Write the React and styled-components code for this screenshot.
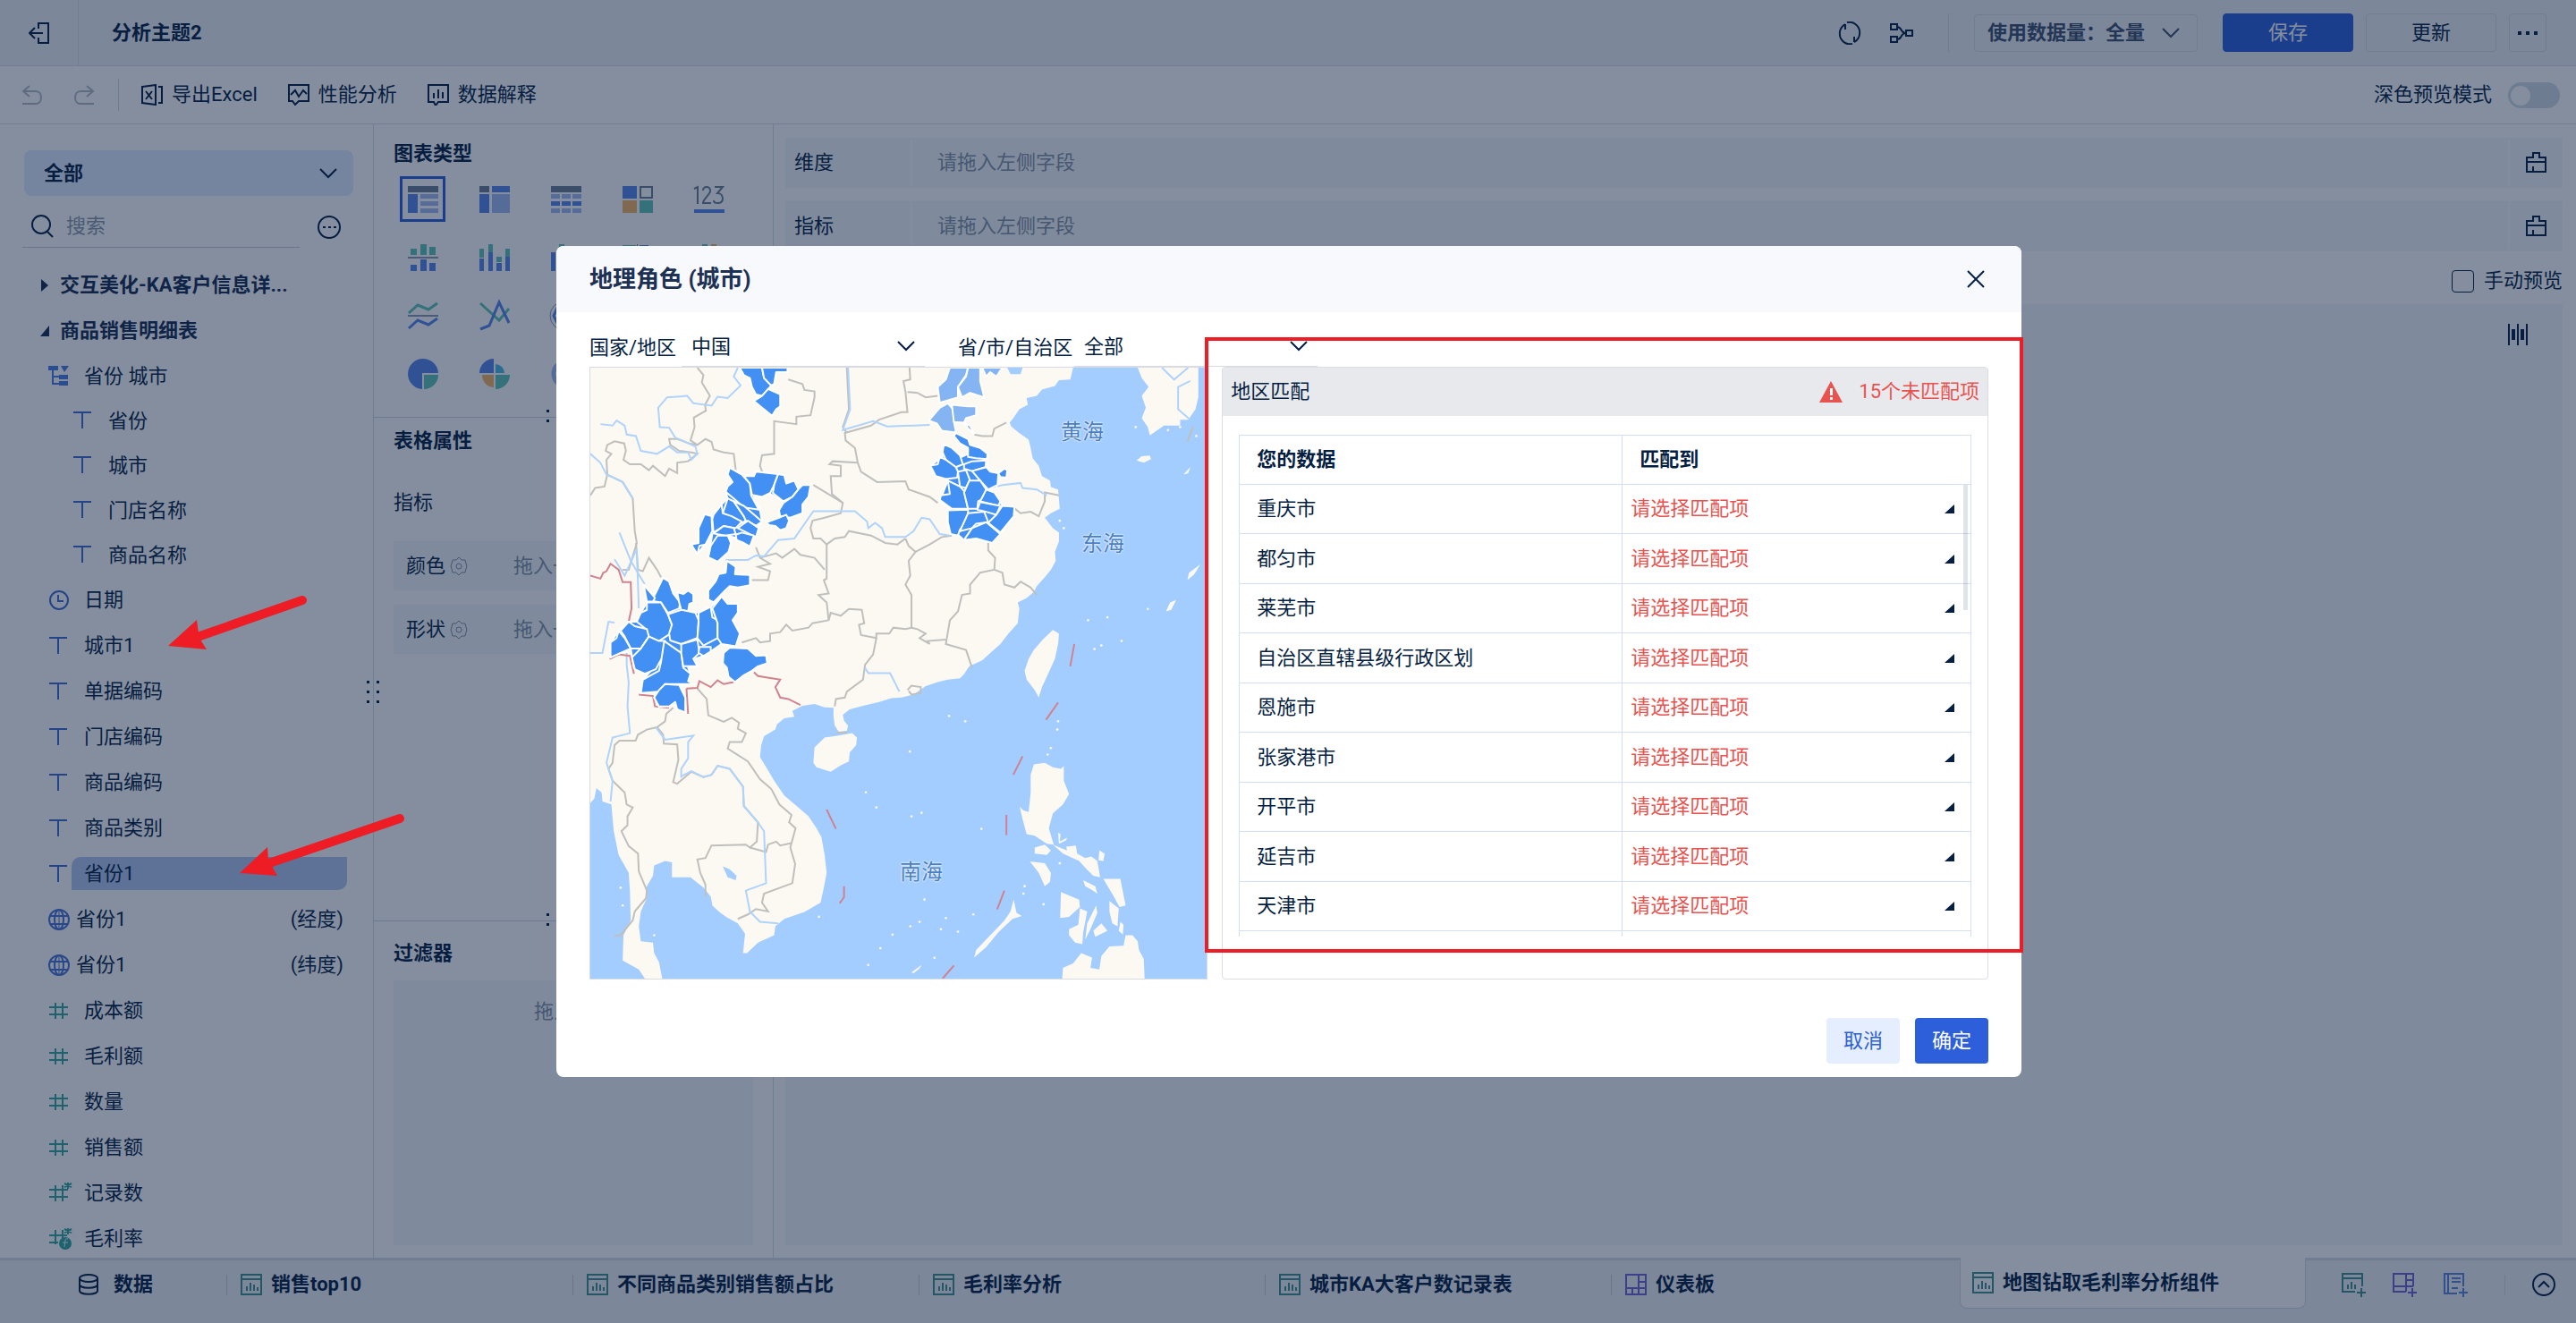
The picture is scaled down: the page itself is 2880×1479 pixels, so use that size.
import React from "react";
import styled, { createGlobalStyle } from "styled-components";

const GlobalStyle = createGlobalStyle`
  * {
    box-sizing: border-box;
  }
  body {
    margin: 0;
    color: #051e42;
    font-size: 22px;
    line-height: 30px;
    font-family: Roboto, "Noto Sans CJK SC", sans-serif;
  }
  button, input, select {
    font: inherit;
    color: inherit;
  }
  svg {
    display: block;
    flex: none;
  }
`;

const Page = styled.div`
  display: flex;
  flex-direction: column;
  height: 100vh;
  overflow: hidden;
  background: #fff;
`;
const Spacer = styled.div`
  flex: 1;
`;
const PlainButton = styled.button`
  display: flex;
  align-items: center;
  gap: ${(p) => p.$gap || 10}px;
  padding: 0;
  border: none;
  background: none;
  opacity: ${(p) => (p.$faded ? 0.3 : 1)};
`;
const Divider = styled.span`
  width: 1px;
  height: ${(p) => p.$height || 43}px;
  margin-left: ${(p) => (p.$push ? "auto" : 0)};
  background: #d5d9df;
`;

/* Header */
const Header = styled.header`
  display: flex;
  align-items: center;
  flex: none;
  height: 74px;
  padding-right: 33px;
  background: #eff0f4;
  border-bottom: 1px solid #dadde3;
`;
const BackCell = styled.div`
  display: flex;
  align-items: center;
  width: 88px;
  height: 73px;
  padding-left: 32px;
  border-right: 1px solid #dadde3;
`;
const PageTitle = styled.h1`
  margin: 0 0 0 37px;
  font-size: 22px;
  font-weight: 700;
`;
const HeaderIcons = styled.div`
  display: flex;
  align-items: center;
  gap: 32px;
  margin-right: 39px;
`;
const DataSelect = styled.div`
  position: relative;
  width: 250px;
  margin: 0 28px;
  color: #3c4e6b;
  svg {
    position: absolute;
    right: 20px;
    top: 15px;
    pointer-events: none;
  }
  select {
    width: 100%;
    height: 42px;
    padding: 0 0 0 14px;
    appearance: none;
    background: none;
    font-weight: 700;
    border: 1px solid #d8dce2;
    border-radius: 4px;
    opacity: 1;
  }
`;
const HeaderButton = styled.button`
  width: ${(p) => (p.$small ? 42 : 146)}px;
  height: 43px;
  margin-left: ${(p) => (p.$primary ? 0 : 14)}px;
  padding: 0;
  display: flex;
  align-items: center;
  justify-content: center;
  color: ${(p) => (p.$primary ? "#fff" : "#051e42")};
  background: ${(p) => (p.$primary ? "#2c5fd9" : "none")};
  border: 1px solid ${(p) => (p.$primary ? "#2c5fd9" : "#d8dce2")};
  border-radius: 4px;
`;

/* Toolbar */
const Toolbar = styled.div`
  display: flex;
  align-items: center;
  flex: none;
  height: 65px;
  padding: 0 18px 0 24px;
  border-bottom: 1px solid #dadde3;
`;
const ToolGroup = styled.div`
  display: flex;
  align-items: center;
  gap: ${(p) => p.$gap}px;
  margin-left: ${(p) => p.$left || 0}px;
`;
const SwitchLabel = styled.label`
  display: flex;
  align-items: center;
  gap: 18px;
  input {
    position: relative;
    appearance: none;
    width: 58px;
    height: 29px;
    margin: 0;
    border-radius: 15px;
    background: #d3dae2;
  }
  input::before {
    content: "";
    position: absolute;
    left: 3px;
    top: 4px;
    width: 22px;
    height: 22px;
    border-radius: 50%;
    background: #fff;
  }
`;

const Main = styled.main`
  display: flex;
  flex: 1;
  min-height: 0;
`;

/* Field list */
const Sidebar = styled.aside`
  position: relative;
  flex: none;
  width: 418px;
  padding-top: 29px;
  border-right: 1px solid #d5dce2;
`;
const TableSelect = styled.div`
  position: relative;
  margin: 0 22px 0 27px;
  svg {
    position: absolute;
    right: 18px;
    top: 20px;
    pointer-events: none;
  }
  select {
    width: 100%;
    height: 51px;
    padding: 0 0 0 22px;
    appearance: none;
    border: none;
    border-radius: 8px;
    background: #e0ecff;
    font-weight: 700;
  }
`;
const SearchRow = styled.div`
  display: flex;
  align-items: center;
  justify-content: space-between;
  margin: 11px 36px 0 25px;
`;
const SearchBox = styled.label`
  display: flex;
  align-items: center;
  gap: 14px;
  width: 310px;
  height: 47px;
  padding-left: 10px;
  border-bottom: 1px solid #c8d0da;
  input {
    width: 200px;
    padding: 0;
    border: none;
    outline: none;
    background: none;
  }
  input::placeholder {
    color: #8c97a8;
    opacity: 1;
  }
`;
const Tree = styled.ul`
  list-style: none;
  margin: 16px 0 0;
  padding: 0;
  max-height: calc(100vh - 366px);
  overflow: hidden;
`;
const TreeRow = styled.li`
  display: flex;
  align-items: center;
  height: ${(p) => (p.$tight ? 50 : 51)}px;
  padding: 0 29px 0 ${(p) => 54 + (p.$level || 0) * 27}px;
`;
const TreeGroup = styled(TreeRow)`
  gap: 12px;
  padding-left: 45px;
  font-weight: 700;
  color: #142b4f;
`;
const TreeIconBox = styled.div`
  width: 24px;
`;
const TreeLabel = styled.span`
  display: flex;
  justify-content: space-between;
  flex: 1;
  height: 37px;
  line-height: 37px;
  margin-left: 2px;
  padding: 0 4px 0 ${(p) => (p.$near ? 5 : 14)}px;
  border-radius: 10px 0;
  background: ${(p) => (p.$selected ? "#b1c6ec" : "none")};
`;
const Dots = styled.span`
  position: absolute;
  display: grid;
  grid-template-columns: repeat(${(p) => p.$cols}, 3px);
  gap: 8px;
  left: ${(p) => p.$left}px;
  ${(p) => (p.$top ? `top: ${p.$top}px;` : "bottom: -6px;")}
  i {
    height: 3px;
    background: #051e42;
  }
`;

/* Chart settings */
const Settings = styled.section`
  display: flex;
  flex-direction: column;
  flex: none;
  width: 447px;
  border-right: 1px solid #d5dce2;
`;
const Block = styled.div`
  position: relative;
  display: flex;
  flex-direction: column;
  flex: ${(p) => (p.$height ? "none" : 1)};
  height: ${(p) => (p.$height ? `${p.$height}px` : "auto")};
  padding: ${(p) => p.$top}px 22px 14px;
  border-bottom: ${(p) => (p.$height ? "1px solid #cfd6de" : "none")};
`;
const BlockTitle = styled.h2`
  margin: 0;
  font-size: 22px;
  font-weight: 700;
`;
const ChartGrid = styled.div`
  display: grid;
  grid-template-columns: repeat(5, 51px);
  grid-auto-rows: 51px;
  gap: 14px 29px;
  margin: 10px 0 0 7px;
`;
const ChartButton = styled.button`
  display: flex;
  align-items: center;
  justify-content: center;
  padding: 0;
  background: none;
  border: 3px solid ${(p) => (p.$active ? "#2c5fd9" : "transparent")};
`;
const AttrLabel = styled.div`
  margin: 39px 0 12px;
`;
const AttrRow = styled.div`
  display: flex;
  align-items: center;
  height: 55px;
  margin-top: 16px;
  padding-left: 14px;
  background: #f5f7f9;
  svg {
    margin: 0 51px 0 5px;
  }
`;
const Hint = styled.span`
  color: #8490a2;
`;
const FilterDrop = styled.div`
  flex: 1;
  margin-top: 15px;
  padding-top: 20px;
  text-align: center;
  background: #f5f7f9;
`;

/* Work area */
const Work = styled.section`
  display: flex;
  flex-direction: column;
  flex: 1;
  padding: 15px 15px 14px 13px;
`;
const Shelf = styled.div`
  display: flex;
  align-items: center;
  height: 56px;
  margin-bottom: 15px;
  background: #f5f7f9;
`;
const ShelfCell = styled.div`
  display: flex;
  align-items: center;
  height: 52px;
  flex: ${(p) => (p.$grow ? 1 : "none")};
  width: ${(p) => p.$width || 0}px;
  padding-left: ${(p) => p.$pad}px;
  border-right: ${(p) => (p.$last ? 0 : 2)}px solid #fbfcfd;
`;
const PreviewLabel = styled.label`
  display: flex;
  align-items: center;
  justify-content: flex-end;
  gap: 11px;
  height: 36px;
  margin-bottom: 8px;
  input {
    appearance: none;
    width: 25px;
    height: 25px;
    margin: 0;
    border: 1px solid #051e42;
    border-radius: 4px;
  }
`;
const Canvas = styled.div`
  display: flex;
  justify-content: flex-end;
  flex: 1;
  padding: 22px 38px;
  background: #f5f7f9;
`;

/* Bottom tabs */
const BottomBar = styled.nav`
  display: flex;
  flex: none;
  height: 73px;
  background: #eff0f4;
  border-top: 3px solid #d5dae2;
  font-weight: 700;
`;
const DataTab = styled.a`
  display: flex;
  align-items: center;
  gap: 15px;
  flex: none;
  width: 253px;
  height: 54px;
  padding-left: 87px;
  color: inherit;
  text-decoration: none;
`;
const Tab = styled.a`
  display: flex;
  align-items: center;
  gap: 10px;
  flex: 0 1 387px;
  height: 54px;
  color: inherit;
  text-decoration: none;
  white-space: nowrap;
  &::before {
    content: "";
    width: 1px;
    height: 23px;
    margin-right: 5px;
    background: #c6ccd6;
  }
`;
const ActiveTab = styled(Tab)`
  height: 57px;
  margin: -3px 0 0 3px;
  padding-left: 13px;
  background: #fff;
  border: 1px solid #d5dae2;
  border-top: none;
  border-radius: 0 0 8px 8px;
  &::before {
    display: none;
  }
`;
const TabActions = styled.div`
  display: flex;
  align-items: center;
  gap: 30px;
  flex: 1;
  height: 54px;
  padding: 0 23px 0 40px;
`;

/* Dialog */
const Overlay = styled.div`
  position: fixed;
  inset: 0;
  display: flex;
  align-items: center;
  justify-content: center;
  padding-left: 2px;
  background: rgba(9, 30, 64, 0.5);
`;
const Dialog = styled.div`
  position: relative;
  width: 1638px;
  max-width: 100%;
  background: #fff;
  border-radius: 8px;
`;
const DialogHeader = styled.div`
  display: flex;
  align-items: center;
  justify-content: space-between;
  height: 74px;
  padding: 0 41px 0 37px;
  border-radius: 8px 8px 0 0;
  background: #f8f9fd;
  h2 {
    margin: 0;
    font-size: 26px;
    font-weight: 700;
    color: #1c3154;
  }
`;
const RegionBar = styled.div`
  display: flex;
  align-items: flex-end;
  height: 61px;
  padding: 0 37px;
`;
const RegionLabel = styled.label`
  height: 42px;
  line-height: 42px;
  width: ${(p) => p.$width}px;
`;
const RegionSelect = styled.div`
  position: relative;
  width: 272px;
  margin-right: 37px;
  svg {
    position: absolute;
    right: 11px;
    top: 14px;
    pointer-events: none;
  }
  select {
    width: 100%;
    height: 43px;
    padding: 0 0 0 11px;
    appearance: none;
    background: none;
    border: none;
    border-bottom: 1px solid #d8dbe3;
  }
`;
const DialogBody = styled.div`
  display: flex;
  gap: 16px;
  height: 685px;
  padding: 0 37px;
`;
const MapBox = styled.div`
  position: relative;
  flex: 691;
  border: 1px solid #d8dbe3;
  background: #a3cdff;
  overflow: hidden;
  svg {
    width: 100%;
    height: 100%;
  }
`;
const SeaName = styled.span`
  position: absolute;
  left: ${(p) => p.$x}px;
  top: ${(p) => p.$y}px;
  font-size: 24px;
  color: #4a7fc4;
  text-shadow: 0 0 2px #fff, 0 0 2px #fff;
`;
const MatchPanel = styled.div`
  flex: 857;
  border: 1px solid #dcdee4;
  border-radius: 4px;
`;
const MatchHeader = styled.div`
  display: flex;
  align-items: center;
  justify-content: space-between;
  height: 54px;
  padding: 0 9px;
  background: #e8e9ed;
`;
const Unmatched = styled.span`
  display: flex;
  align-items: center;
  gap: 17px;
  color: #e85350;
`;
const MatchScroll = styled.div`
  position: relative;
  height: 561px;
  margin: 21px 18px 0;
  overflow: hidden;
  &::after {
    content: "";
    position: absolute;
    right: 4px;
    top: 56px;
    width: 5px;
    height: 140px;
    background: rgba(9, 30, 64, 0.12);
  }
`;
const MatchTable = styled.table`
  width: 100%;
  table-layout: fixed;
  border-collapse: collapse;
  th, td {
    height: 55px;
    padding: 0 0 0 19px;
    text-align: left;
    border: 1px solid #d3dff7;
  }
  tr:nth-child(even) td {
    height: 56px;
  }
  th:first-child {
    width: 428px;
  }
  td + td {
    padding: 0 18px 0 9px;
  }
`;
const MatchCell = styled.div`
  display: flex;
  align-items: center;
  select {
    flex: 1;
    padding: 0;
    appearance: none;
    border: none;
    background: none;
    color: #e85350;
  }
`;
const DialogFooter = styled.div`
  display: flex;
  justify-content: flex-end;
  gap: 17px;
  padding: 43px 37px 15px;
`;
const FooterButton = styled.button`
  width: 82px;
  height: 51px;
  padding: 0;
  border: none;
  border-radius: 4px;
  color: ${(p) => (p.$primary ? "#fff" : "#2c5fd9")};
  background: ${(p) => (p.$primary ? "#2c5fd9" : "#e5eeff")};
`;
const RedFrame = styled.div`
  position: absolute;
  left: 725px;
  top: 102px;
  width: 915px;
  height: 688px;
  border: 4px solid #ee1c25;
  pointer-events: none;
`;
const Arrows = styled.svg`
  position: fixed;
  left: 180px;
  top: 660px;
  fill: #ee1c25;
  stroke: #ee1c25;
  pointer-events: none;
`;

const BLUE = "#5787ea";
const PALE = "#a3baf0";
const SLATE = "#6b7e93";
const TEAL = "#5fc4b4";
const GOLD = "#f5b560";

const Chevron = () => (
  <svg width="20" height="12" fill="none" stroke="currentColor" strokeWidth="2">
    <path d="M1 1l9 9 9-9" />
  </svg>
);

const Line = ({ w = 24, h = 24, color = "#051e42", width = 2, children }) => (
  <svg width={w} height={h} fill="none" stroke={color} strokeWidth={width}>
    {children}
  </svg>
);

const TextIcon = () => (
  <Line color="#3f6bd0">
    <path d="M1 3h20M11 3v18" />
  </Line>
);
const HashIcon = ({ star, fx }) => (
  <Line w={28} color="#33a79b">
    <path d={fx ? "M8 2v16M16 2v9M1 8h20M1 16h10" : "M8 3v18M16 3v18M1 8h21M1 16h21"} />
    {star && <path d="M22-1v8M18 1l8 4M26 1l-8 4" strokeWidth="2" />}
    {fx && <circle cx="19" cy="17" r="7" fill="#33a79b" stroke="none" />}
    {fx && <path d="M22 12c-2-1-3 0-3 2l-1 7M16 16h6" stroke="#dff" strokeWidth="1" />}
  </Line>
);
const GlobeIcon = () => (
  <Line w={24} h={26} color="#4a73d2" width={1}>
    <circle cx="12" cy="13" r="11" strokeWidth="2" />
    <ellipse cx="12" cy="13" rx="5" ry="11" strokeWidth="2" />
    <path d="M12 2v22" />
    <path d="M2 9h20M2 18h20" strokeWidth="2" />
  </Line>
);
const ClockIcon = () => (
  <Line color="#3f6bd0">
    <circle cx="12" cy="12" r="10" />
    <path d="M11 6v7h6" />
  </Line>
);
const TreeIcon = () => (
  <svg width="24" height="24" fill="#4a7be0">
    <path d="M0 1h11v5H0zM14 1h9l-5 7zM12 11h10v5H12zM12 18h10v5H12zM4 6h2v14h6v2H4zM5 12h7v2H5z" />
  </svg>
);

const icons = {
  tree: <TreeIcon />,
  text: <TextIcon />,
  clock: <ClockIcon />,
  globe: <GlobeIcon />,
  hash: <HashIcon />,
  hashStar: <HashIcon star />,
  hashFx: <HashIcon star fx />,
};

const fields = [
  { icon: "tree", name: "省份 城市", tight: true },
  { icon: "text", name: "省份", level: 1, tight: true },
  { icon: "text", name: "城市", level: 1, tight: true },
  { icon: "text", name: "门店名称", level: 1, tight: true },
  { icon: "text", name: "商品名称", level: 1, tight: true },
  { icon: "clock", name: "日期" },
  { icon: "text", name: "城市1" },
  { icon: "text", name: "单据编码" },
  { icon: "text", name: "门店编码" },
  { icon: "text", name: "商品编码" },
  { icon: "text", name: "商品类别" },
  { icon: "text", name: "省份1", selected: true },
  { icon: "globe", name: "省份1", note: "(经度)" },
  { icon: "globe", name: "省份1", note: "(纬度)" },
  { icon: "hash", name: "成本额" },
  { icon: "hash", name: "毛利额" },
  { icon: "hash", name: "数量" },
  { icon: "hash", name: "销售额" },
  { icon: "hashStar", name: "记录数" },
  { icon: "hashFx", name: "毛利率" },
];

const chartIcons = [
  ["分组表", <><path fill={SLATE} d="M0 0h34v7H0z" /><path fill={BLUE} d="M0 9h11v21H0z" /><path fill={PALE} d="M14 9h20v5H14zM14 17h20v5H14zM14 25h20v5H14z" /></>],
  ["交叉表", <><path fill={SLATE} d="M0 0h11v7H0z" /><path fill={BLUE} d="M14 0h20v7H14zM0 9h11v21H0z" /><path fill={PALE} d="M14 9h20v21H14z" /></>],
  ["明细表", <><path fill={SLATE} d="M0 0h34v7H0z" /><path fill={PALE} d="M0 9h10v5H0zM12 9h10v5H12zM24 9h10v5H24zM0 25h10v5H0zM12 25h10v5H12zM24 25h10v5H24z" /><path fill={BLUE} d="M0 17h10v5H0zM12 17h10v5H12zM24 17h10v5H24z" /></>],
  ["颜色表格", <><path fill={BLUE} d="M0 0h16v14H0z" /><path fill="none" stroke={SLATE} strokeWidth="2" d="M20 1h13v12H20z" /><path fill={GOLD} d="M0 16h16v14H0z" /><path fill={TEAL} d="M19 16h15v14H19z" /></>],
  ["指标卡", <><path fill="none" stroke={SLATE} strokeWidth="2" d="M0 3l4-2v19M10 5c0-6 9-5 8 1-1 4-8 9-8 13h9M23 1h9l-6 7c8 0 8 12 0 11-2 0-4-1-4-3" /><path fill={BLUE} d="M0 26h34v4H0z" /></>],
  ["对比柱形图", <><path fill={TEAL} d="M3 5h7v7H3zM14 0h7v12h-7zM24 3h7v9h-7z" /><path fill="#8c98ab" d="M0 14h34v2H0z" /><path fill={BLUE} d="M3 23h7v7H3zM14 17h7v13h-7zM24 21h7v9h-7z" /></>],
  ["堆积柱形图", <><path fill={TEAL} d="M0 5h5v10H0zM10 0h5v9h-5zM19 14h6v6h-6zM29 5h5v9h-5z" /><path fill={BLUE} d="M0 16h5v14H0zM10 9h5v21h-5zM19 21h6v9h-6zM29 14h5v16h-5z" /></>],
  ["分组柱形图", <><path fill={BLUE} d="M0 9h5v21H0z" /><path fill={TEAL} d="M9 0h6v30H9z" /></>],
  ["对比条形图", <><path fill={TEAL} d="M0 1h15v6H0z" /><path fill={SLATE} d="M16 0h1v30h-1z" /><path fill={BLUE} d="M19 1h10v6H19z" /></>],
  ["瀑布图", <><path fill={TEAL} d="M9 0h6v9H9z" /><path fill={GOLD} d="M19 0h6v14h-6z" /></>],
  ["范围面积图", <><path fill="none" stroke={TEAL} strokeWidth="3" d="M1 12l10-9 12 5L33 1" /><path fill="#8c98ab" d="M0 14h34v2H0z" /><path fill="none" stroke={BLUE} strokeWidth="3" d="M1 29l10-9 12 5 10-7" /></>],
  ["折线图", <><path fill="none" stroke={TEAL} strokeWidth="3" d="M1 1l21 19L33 7" /><path fill="none" stroke={BLUE} strokeWidth="3" d="M1 30l10-4L22 0l11 23" /></>],
  ["雷达图", <><circle cx="15" cy="15" r="16" fill="none" stroke="#8c98ab" /><path fill="none" stroke={BLUE} strokeWidth="3" d="M9 2L3 15l6 12" /></>],
  ["散点图", <circle cx="17" cy="15" r="5" fill={TEAL} />],
  ["气泡图", <circle cx="17" cy="15" r="7" fill={BLUE} />],
  ["饼图", <><path fill={BLUE} d="M16 32A17 17 0 1 1 34 14H16z" /><path fill={TEAL} d="M18 16h16a16 16 0 0 1-16 16z" /></>],
  ["玫瑰图", <><path fill={BLUE} d="M16-2v16H0A16 16 0 0 1 16-2z" /><path fill="#4bb8e0" d="M18 4a11 10 0 0 1 10 10H18z" /><path fill={GOLD} d="M16 16v14A13 14 0 0 1 3 16z" /><path fill={TEAL} d="M18 16h16a16 16 0 0 1-16 16z" /></>],
  ["环形图", <circle cx="17" cy="15" r="14" fill="none" stroke={PALE} strokeWidth="5" />],
];

const cities = ["重庆市", "都匀市", "莱芜市", "自治区直辖县级行政区划", "恩施市", "张家港市", "开平市", "延吉市", "天津市"];

const land = [
  "20,150 1052,150 1060,172 1085,172 1090,150 1215,150 1208,190 1180,192 1170,212 1138,224 1125,245 1100,252 1103,275 1082,290 1068,318 1058,335 1062,348 1080,368 1105,392 1110,420 1115,455 1130,480 1138,515 1158,530 1160,552 1178,560 1182,625 1160,640 1145,655 1165,690 1180,705 1180,735 1170,770 1172,800 1160,830 1145,855 1125,885 1118,905 1100,925 1078,940 1082,960 1078,1010 1055,1045 1035,1080 1010,1110 990,1135 958,1155 945,1182 935,1195 905,1200 880,1208 850,1222 820,1250 790,1260 765,1262 735,1275 695,1288 662,1300 645,1318 648,1338 658,1355 655,1372 635,1375 625,1355 622,1325 622,1295 600,1293 575,1282 545,1288 520,1305 525,1325 500,1330 482,1350 478,1368 450,1390 443,1420 440,1460 460,1505 475,1540 500,1590 535,1630 560,1660 580,1700 592,1730 600,1790 605,1850 598,1900 590,1950 550,1982 500,2005 478,2030 475,2060 435,2085 408,2120 398,2120 403,2055 385,2020 358,2000 342,1985 322,1960 318,1930 300,1900 268,1865 222,1865 222,1815 205,1810 178,1825 175,1860 158,1900 160,1935 145,1980 140,2030 145,2080 175,2085 178,2120 190,2150 198,2206 155,2206 140,2175 100,2145 102,2060 120,2010 118,1910 115,1850 90,1790 78,1710 72,1620 50,1610 48,1580 35,1565 30,1600 20,1615",
  "575,1428 600,1395 635,1388 668,1380 680,1395 678,1420 662,1445 660,1475 640,1488 615,1510 580,1495 572,1480",
  "1165,1033 1180,1045 1178,1080 1170,1130 1160,1160 1150,1190 1138,1225 1130,1260 1120,1235 1100,1200 1095,1170 1105,1130 1118,1100 1140,1065",
  "1375,150 1525,150 1525,250 1518,290 1500,325 1480,325 1480,345 1440,345 1405,378 1400,350 1385,320 1395,285 1385,245 1402,215 1385,185",
  "1372,462 1385,448 1405,446 1408,458 1390,470",
  "1118,1485 1145,1480 1165,1495 1185,1500 1192,1490 1192,1540 1205,1585 1190,1620 1165,1650 1155,1700 1167,1755 1150,1752 1120,1725 1100,1720 1090,1670 1083,1628 1092,1640 1105,1645 1110,1580 1110,1520",
  "1120,1765 1145,1755 1160,1775 1150,1790 1120,1785",
  "1108,1812 1145,1818 1160,1850 1158,1880 1145,1895 1130,1850",
  "1165,1755 1200,1775 1198,1762 1222,1758 1225,1785 1245,1800 1260,1795 1275,1810 1282,1865 1265,1860 1250,1840 1230,1810 1190,1785",
  "1280,1775 1293,1785 1290,1810 1278,1808",
  "1178,1715 1184,1720 1182,1745 1200,1732 1198,1740 1180,1752",
  "1290,1870 1332,1870 1345,1960 1330,1965 1318,1935 1305,1905",
  "1185,1915 1230,1940 1232,1965 1205,1998 1183,2002",
  "1232,1970 1250,1980 1240,2050 1238,2090 1220,2085 1205,2060 1205,2040 1228,2025",
  "1272,1960 1275,1985 1258,2040 1245,2075 1250,2020",
  "1265,2045 1285,2020 1300,2045 1270,2065",
  "1305,1945 1328,1970 1325,2030 1312,2020 1305,1980",
  "1240,1875 1270,1895 1275,1920 1262,1908 1245,1895",
  "1332,2015 1340,2025 1338,2058 1328,2045",
  "1188,2206 1190,2170 1215,2155 1235,2120 1262,2135 1258,2170 1280,2175 1285,2130 1305,2098 1340,2095 1345,2060 1362,2060 1375,2080 1378,2110 1390,2140 1392,2206",
  "1068,1940 1075,1985 1088,1995 1065,2005 1030,2050 1000,2100 970,2135 975,2110 1010,2060 1045,2010 1060,1980",
  "815,2185 840,2160 835,2172 820,2188",
  "1488,510 1505,485 1500,505",
  "1498,865 1502,840 1530,812 1515,845",
  "1445,970 1455,940 1470,932 1458,965",
];
const specks = [
  [908, 1322], [948, 1340], [1178, 1340], [1176, 1368], [1160, 1430], [1152, 1452], [811, 1442], [728, 1630], [702, 1579],
  [815, 1660], [840, 1648], [988, 1702], [1252, 1000], [1300, 990], [1285, 1085], [1335, 1070], [1268, 1097], [847, 1940],
  [968, 1990], [900, 2002], [888, 2040], [812, 2030], [768, 2058], [835, 2015], [930, 2048], [872, 2136], [1095, 1895],
  [1092, 1920], [1182, 1818], [1142, 1956], [708, 2160], [738, 2104], [586, 1998], [1400, 962], [1182, 665], [1192, 690],
  [1420, 340], [1370, 350], [1450, 360], [1480, 350], [1520, 380], [95, 1900], [100, 1960], [178, 2060],
];
const borders = [
  "285,150 300,175 296,200 316,245 304,275 306,295 276,318 278,350 268,395 285,410",
  "20,580 32,555 55,550 62,510 60,460 72,440 58,430 62,410 80,398 104,405 108,430 102,460 118,475 145,475 165,495 175,480 205,515 215,490 235,505 235,470 262,465 285,440 270,435 240,430 218,410 215,390 235,390 265,405 285,410 305,390 320,400 325,425 350,435 375,440 380,495",
  "510,190 545,205 550,225 575,230 575,250 565,310 530,315 530,340 475,330 475,440 445,445 440,480 445,500",
  "655,150 660,290 645,350 655,370",
  "810,150 812,190 795,195 800,230 805,300 790,300 735,325 715,345 650,370 652,395 675,420 682,470 690,500 730,535 800,532 808,560 860,585 880,605",
  "805,232 830,235 850,250 880,245",
  "682,470 620,465 612,475 640,480 640,515 615,515 618,575 645,605 640,640 600,655 570,665 565,690 572,725 590,725 605,745 625,725 650,720 660,700 715,715 750,740 780,745 800,725",
  "572,545 645,605",
  "605,745 605,860 598,865 610,910 585,915 605,940 610,1000",
  "800,725 808,750 825,770 808,800 812,850 800,880 815,915 815,1025",
  "825,770 860,745 890,720 915,715",
  "1005,740 1005,765 1022,790 1020,830 1040,840 1045,880 1070,890 1085,870 1110,890 1125,915",
  "1020,830 985,840 960,880 960,910 940,915 930,970 910,1000 900,1080 950,1100 960,1140 965,1160",
  "610,1000 570,1010 560,1025 520,1035 505,1015 490,1040 465,1045 465,1070 440,1075 430,1060 395,1075",
  "610,1000 615,975 640,985 660,962 692,965 698,1010 685,1015 690,1050 728,1060 728,1045 760,1045 770,1025 800,1030 815,1025 830,1030 850,1045 835,1060 860,1080 855,1070 900,1065",
  "728,1060 720,1115 700,1150 695,1200 655,1240 650,1260 628,1265 625,1290",
  "430,755 440,790 465,810 435,820 465,835 460,865 420,865",
  "440,790 480,775 495,790 525,760 540,780 575,790 600,830",
  "62,510 100,535 125,590 130,700 135,740 115,830 100,830",
  "133,740 138,830 150,835 165,790 185,830 195,855",
  "1065,618 1085,640 1110,635 1130,650 1145,600 1145,570 1180,580",
  "970,375 990,380 1015,380 1020,355 1050,335",
  "285,1230 308,1265 312,1320 350,1342 370,1328 388,1345 385,1365 405,1380 395,1410 365,1410 360,1432 410,1475 440,1535 468,1568 488,1620 518,1655 512,1680 528,1700 515,1765 527,1820 520,1885 450,1920 445,1950 460,1980 430,1972 410,1990 385,2005",
  "225,1295 208,1315 205,1340 185,1360 160,1368 138,1385 132,1405 92,1405 80,1420 75,1480 65,1500 75,1540 105,1580 110,1620 125,1630 112,1660 112,1690 97,1710 115,1760 138,1785 140,1845 160,1910 158,1935 130,1980 125,2010 95,2060 80,2062",
  "185,1360 200,1385 202,1415 235,1418 238,1470 225,1545 235,1550 270,1510 300,1528 320,1520 335,1490 365,1500 398,1560 400,1625 435,1680 432,1745 415,1765 405,1755 320,1758 305,1800 285,1805 292,1850 305,1890 305,1930",
  "415,1765 455,1780 460,1755 480,1745 490,1758 518,1750",
  "630,1378 655,1378",
  "805,1235 815,1220 838,1225 838,1245 815,1250 808,1238",
  "1498,400 1512,348",
];
const rivers = [
  "45,340 75,345 85,328 105,345 110,375 133,380 145,430 185,440 215,415 235,435 262,435 270,460 285,440 280,415 230,385 215,352 192,350 188,285 210,250 260,245 275,270 320,278 335,248 360,252 392,210 375,180 385,150",
  "355,797 410,797 430,782 450,785 485,730 525,725 572,633 675,633 705,668 708,690 725,672 742,690 750,720 800,720 820,700 840,655 860,660 885,710 910,715",
  "658,150 663,290 645,360 720,330 755,348 860,343",
  "1025,550 1040,545 1085,538 1090,555 1125,560 1150,580",
  "20,440 45,470 60,510 100,535 125,590",
  "92,705 120,800 155,880",
  "80,795 105,850 135,760 140,960",
  "20,1110 50,1110 65,1005 80,1008",
  "110,1110 110,1150 115,1210 112,1290 118,1380 75,1395 60,1480 75,1540 70,1610",
  "182,1360 205,1402 275,1388 262,1410 262,1465 245,1500 245,1530",
  "245,1525 270,1508 300,1528 320,1520 335,1490 365,1500 398,1560 400,1625 435,1680 450,1710 455,1885 405,1910 415,1980 440,2015 485,2020",
  "700,1160 708,1178 762,1178 785,1240",
  "1435,150 1465,190 1500,150",
  "1505,195 1475,215 1475,290 1505,325",
];
const redLines = [
  "20,850 45,860 52,840 60,835 70,810 90,830 100,872 120,872 122,960 115,1005",
  "425,1175 435,1188 490,1200 478,1225 490,1260 510,1265 540,1285",
  "258,1230 285,1228 290,1205 318,1225 335,1202 350,1215 375,1208",
  "68,1130 90,1115 118,1120 128,1180",
  "140,1250 175,1255 180,1290 215,1295",
  "258,1230 262,1315",
  "1218,1080 1208,1155",
  "1178,1277 1148,1335",
  "1090,1458 1067,1520",
  "1050,1655 1050,1723",
  "1045,1910 1027,1973",
  "920,2162 892,2206",
  "605,1637 628,1702",
  "648,1895 648,1932 637,1953",
];
// outer shapes of the coloured clusters, drawn under their cities
const clusters = [
  "365,487 395,510 425,515 430,500 485,508 500,512 505,540 525,530 535,560 520,585 498,600 465,575 445,585 425,585 440,630 445,668 432,690 437,695 425,715 415,752 385,725 360,715 368,740 362,770 335,803 312,788 322,710 303,745 285,778 270,745 288,740 288,690 303,643 320,655 345,610 360,590 355,568 360,550 372,535 360,510",
  "895,408 915,420 940,450 955,440 1002,442 1002,480 1010,500 1030,505 1052,495 1050,520 1030,520 1025,555 1005,562 1035,600 1040,615 1070,618 1068,650 1050,680 1035,710 1015,740 975,725 945,730 930,712 912,710 900,630 912,625 885,600 905,530 875,515 862,480 892,450",
  "345,920 360,945 385,945 385,975 372,1000 390,1045 380,1088 345,1080 318,1105 300,1120 280,1130 285,1155 262,1160 268,1180 262,1205 275,1215 240,1218 255,1260 255,1310 230,1285 190,1290 178,1260 190,1242 145,1245 150,1200 170,1170 128,1160 120,1095 70,1125 70,1075 90,1035 115,1005 135,1005 145,975 160,940 185,900 200,857 215,870 225,910 242,940 265,945 262,970 290,975 318,955",
];
const regions = [
  "365,487 395,510 415,540 418,580 437,628 400,620 375,590 355,568 360,550 372,535 360,510",
  "400,515 425,515 430,500 485,508 475,545 465,572 445,585 420,578 415,540",
  "485,508 500,512 505,540 525,530 535,560 520,585 498,600 472,572 475,545",
  "535,560 545,545 565,545 560,585 545,610 545,640 515,655 490,650 487,630 498,605 520,585",
  "457,670 487,655 505,645 512,665 505,690 490,697 478,683 462,680",
  "360,590 375,600 400,650 405,665 385,680 365,655 348,640",
  "345,610 348,640 370,650 395,668 380,690 350,683 325,705 322,660 325,645",
  "303,643 320,650 322,700 305,745 290,750 285,778 270,745 288,740 288,690",
  "375,600 400,615 445,668 430,682 405,665 400,650",
  "395,680 410,665 437,690 430,720 385,690",
  "350,683 375,690 380,710 355,715 325,708",
  "380,712 395,705 425,715 415,752 400,740 382,730",
  "318,750 335,715 360,715 368,740 362,770 335,803 312,788",
  "358,800 380,820 378,845 415,848 415,882 385,890 365,885 350,905 325,940 312,930 312,900 330,870 338,845 355,840",
  "200,857 215,870 225,910 242,940 240,960 212,975 195,940 172,935 185,900",
  "152,880 180,925 175,937 160,937",
  "235,905 250,912 262,900 275,912 275,940 265,945 262,970 245,965 240,940",
  "160,940 195,940 212,980 222,1015 218,1045 190,1070 165,1055 158,1030 135,1005 145,975 160,965",
  "212,980 245,965 280,975 288,1000 285,1060 245,1080 218,1068 215,1045 222,1015",
  "288,975 318,955 322,990 335,1000 335,1060 300,1085 285,1060 288,1010",
  "345,920 360,945 385,945 385,975 372,1000 390,1045 380,1088 345,1080 335,1060 335,1010 322,960",
  "115,1005 130,1020 160,1030 165,1055 145,1095 120,1095 105,1055 95,1035",
  "90,1035 105,1060 120,1095 95,1110 70,1125 70,1075 85,1060",
  "145,1095 165,1055 190,1070 205,1070 205,1110 190,1145 182,1165 155,1180 130,1165 123,1125",
  "203,1070 245,1110 250,1160 268,1180 262,1205 275,1215 240,1215 205,1215 195,1240 145,1245 150,1200 190,1170 195,1140",
  "205,1215 240,1218 255,1260 255,1310 235,1300 230,1275 215,1290 190,1290 178,1260 190,1235",
  "245,1080 285,1065 290,1110 275,1130 285,1155 250,1155 245,1110",
  "290,1090 318,1090 318,1105 300,1120 288,1110",
  "350,1110 365,1092 410,1095 430,1120 455,1118 458,1145 435,1155 420,1170 400,1185 378,1208 362,1190 358,1160 348,1145",
  "390,150 445,150 450,185 468,210 445,245 430,240 420,215 415,185 400,175",
  "445,150 508,150 508,165 480,165 475,205 468,210 450,185",
  "445,245 460,222 490,240 490,280 480,290 470,312 445,285 425,262",
  "925,370 955,390 960,410 985,420 1003,440 1002,458 975,455 955,450 955,420 935,405 920,380",
  "895,408 915,420 935,445 942,475 925,485 900,460 892,435",
  "885,450 900,460 925,485 930,500 928,520 900,525 875,515 862,480 880,475",
  "945,475 965,465 1000,462 998,485 965,498 945,490",
  "930,500 950,495 960,530 950,555 935,550",
  "965,498 1000,485 1010,500 1030,505 1028,545 1005,560 985,530",
  "1030,505 1045,490 1052,495 1050,520 1035,518",
  "905,530 935,550 945,565 955,625 915,625 885,595 888,580 910,575",
  "958,530 985,530 1000,560 995,590 980,600 978,625 955,625 945,570",
  "1000,560 1020,570 1035,600 1030,615 985,600",
  "985,602 1035,615 1025,645 1000,635 978,628",
  "905,630 955,628 955,660 935,695 930,715 912,710 905,670",
  "1040,615 1070,618 1068,650 1050,680 1035,705 1005,672 1025,645",
  "955,640 995,635 1005,670 975,675 965,690 935,700",
  "965,690 1000,670 1035,710 1015,740 975,725 945,730",
];
const paleRegions = [
  "910,150 955,150 950,175 930,215 930,250 885,268 880,215 900,190",
  "955,150 985,150 985,195 995,250 960,235 940,250 930,215 950,180",
  "990,150 1040,150 1025,180 1010,165 1000,180",
  "905,270 918,290 920,330 925,368 890,362 878,338 858,328 885,285",
  "915,275 955,280 975,280 975,310 950,320 945,335 920,333",
  "948,338 960,345 970,372 955,355",
];

const Lines = ({ list, color, width }) =>
  list.map((points) => (
    <polyline key={points} points={points} fill="none" stroke={color} strokeWidth={width} vectorEffect="non-scaling-stroke" />
  ));
const Shapes = ({ list, color, stroke }) =>
  list.map((points) => (
    <polygon key={points} points={points} fill={color} stroke={stroke} strokeWidth="2" strokeLinejoin="round" vectorEffect="non-scaling-stroke" />
  ));

const ChinaMap = () => (
  <MapBox>
    <svg viewBox="20 150 1526 2056" preserveAspectRatio="none">
      <Shapes list={land} color="#fcf9f2" stroke="none" />
      {specks.map(([x, y]) => (
        <ellipse key={`${x}-${y}`} cx={x} cy={y} rx="3" ry="4" fill="#fcf9f2" />
      ))}
      <polygon points="348,1828 365,1838 382,1860 380,1875 360,1865" fill="#a3cdff" />
      <Lines list={borders} color="#bfbfbd" width="2" />
      <Lines list={rivers} color="#b0d3fb" width="2" />
      <Lines list={redLines} color="#d0828f" width="2" />
      <Shapes list={clusters} color="#4390f4" stroke="#fff" />
      <Shapes list={regions} color="#4390f4" stroke="#fff" />
      <Shapes list={paleRegions} color="#84b4f2" stroke="#fff" />
    </svg>
    <SeaName $x={526} $y={57}>黄海</SeaName>
    <SeaName $x={549} $y={182}>东海</SeaName>
    <SeaName $x={346} $y={549}>南海</SeaName>
  </MapBox>
);

const ChartTabIcon = () => (
  <Line w={24} color="#3f8f8a">
    <path d="M1 1h22v22H1zM1 6h22M7 19v-5M11 19v-9M15 19v-7M19 19v-4" />
  </Line>
);
const BoardIcon = () => (
  <Line w={24} color="#6c63d0">
    <path d="M1 1h22v22H1zM15 1v22M1 16h22M15 9h8M8 16v7" />
  </Line>
);
const AddIcon = ({ color, d }) => (
  <Line w={27} h={27} color={color}>
    <path d={d} />
    <path d="M17 22h10M22 17v10" />
  </Line>
);
const BrushIcon = () => (
  <Line>
    <path d="M1 6h7V1h7v5h7v16H1zM1 11h21M8 22v-6" />
  </Line>
);
const GearIcon = () => (
  <Line w={20} h={22} color="#8490a2" width={1}>
    <path d="M10 1l3 3 4 0 1 4 1 3-1 3-1 4-4 0-3 3-3-3-4 0-1-4-1-3 1-3 1-4 4 0z" />
    <circle cx="10" cy="11" r="3" />
  </Line>
);
const DotCells = ({ count }) => Array.from({ length: count }, (_, i) => <i key={i} />);

const TopBar = () => (
  <Header>
    <BackCell>
      <PlainButton aria-label="返回">
        <Line w={24} h={24}>
          <path d="M11 7V1h11v22H11v-6M1 12h15M7 6l-6 6 6 6" />
        </Line>
      </PlainButton>
    </BackCell>
    <PageTitle>分析主题2</PageTitle>
    <Spacer />
    <HeaderIcons>
      <PlainButton aria-label="刷新">
        <Line w={26} h={26}>
          <path d="M8 24A12 12 0 0 1 8 3M18 2a12 12 0 0 1 0 21M10 1a12 12 0 0 1 8 1M16 25a12 12 0 0 1-8-1M8 3v6M18 23v-6" />
        </Line>
      </PlainButton>
      <PlainButton aria-label="血缘">
        <Line w={26} h={24}>
          <path d="M1 2h7v6H1zM1 16h7v6H1zM18 9h7v6h-7zM8 5c6 0 3 7 10 7M8 19c6 0 3-7 10-7" />
        </Line>
      </PlainButton>
    </HeaderIcons>
    <Divider />
    <DataSelect>
      <select aria-label="使用数据量">
        <option>使用数据量：全量</option>
      </select>
      <Chevron />
    </DataSelect>
    <HeaderButton $primary>保存</HeaderButton>
    <HeaderButton>更新</HeaderButton>
    <HeaderButton $small aria-label="更多">
      <svg width="22" height="4" fill="#051e42">
        <path d="M0 0h4v4H0zM9 0h4v4H9zM18 0h4v4h-4z" />
      </svg>
    </HeaderButton>
  </Header>
);

const Tools = () => (
  <Toolbar>
    <ToolGroup $gap={34}>
      <PlainButton aria-label="撤销" $faded>
        <Line w={24} h={22}>
          <path d="M9 1L2 7l7 6M2 7h14c8 0 8 14 0 14H1" />
        </Line>
      </PlainButton>
      <PlainButton aria-label="重做" $faded>
        <Line w={24} h={22}>
          <path d="M15 1l7 6-7 6M22 7H8c-8 0-8 14 0 14h15" />
        </Line>
      </PlainButton>
    </ToolGroup>
    <ToolGroup $gap={25} $left={26}>
      <Divider $height={36} />
      <ToolGroup $gap={34}>
        <PlainButton>
          <Line>
            <path d="M1 3l15-2v22L1 21zM19 3h4v18h-4M5 8l7 9M12 8l-7 9" />
          </Line>
          导出Excel
        </PlainButton>
        <PlainButton>
          <Line>
            <path d="M1 1h22v18H12l-4 4-3-4H1zM3 12l5-5 4 7 5-7 4 4" />
          </Line>
          性能分析
        </PlainButton>
        <PlainButton>
          <Line>
            <path d="M1 1h22v19H12l-3 4-2-4H1zM7 16V10M12 16V6M17 16V9" />
          </Line>
          数据解释
        </PlainButton>
      </ToolGroup>
    </ToolGroup>
    <Spacer />
    <SwitchLabel>
      深色预览模式
      <input type="checkbox" role="switch" />
    </SwitchLabel>
  </Toolbar>
);

const FieldList = () => (
  <Sidebar>
    <TableSelect>
      <select aria-label="数据表">
        <option>全部</option>
      </select>
      <Chevron />
    </TableSelect>
    <SearchRow>
      <SearchBox>
        <Line w={25} h={26}>
          <circle cx="11" cy="11" r="10" />
          <path d="M18 19l6 6" />
        </Line>
        <input placeholder="搜索" aria-label="搜索" />
      </SearchBox>
      <PlainButton aria-label="更多">
        <Line w={26} h={26}>
          <circle cx="13" cy="13" r="12" />
          <path d="M6 13h3M12 13h3M18 13h3" />
        </Line>
      </PlainButton>
    </SearchRow>
    <Tree>
      <TreeGroup>
        <svg width="10" height="14" fill="#142b4f"><path d="M1 0l8 7-8 7z" /></svg>
        交互美化-KA客户信息详...
      </TreeGroup>
      <TreeGroup>
        <svg width="10" height="12" fill="#142b4f"><path d="M10 0v12H0z" /></svg>
        商品销售明细表
      </TreeGroup>
      {fields.map((f, i) => (
        <TreeRow key={i} $level={f.level} $tight={f.tight}>
          <TreeIconBox>{icons[f.icon]}</TreeIconBox>
          <TreeLabel $near={!!f.note} $selected={f.selected}>
            {f.name}
            {f.note && <span>{f.note}</span>}
          </TreeLabel>
        </TreeRow>
      ))}
    </Tree>
    <Dots $cols={2} $left={410} $top={622}><DotCells count={6} /></Dots>
  </Sidebar>
);

const ChartSettings = () => (
  <Settings>
    <Block $height={328} $top={18}>
      <BlockTitle>图表类型</BlockTitle>
      <ChartGrid>
        {chartIcons.map(([name, drawing], i) => (
          <ChartButton key={name} $active={i === 0} aria-label={name}>
            <svg width="34" height="30" overflow="visible">{drawing}</svg>
          </ChartButton>
        ))}
      </ChartGrid>
      <Dots $cols={5} $left={193}><DotCells count={10} /></Dots>
    </Block>
    <Block $height={563} $top={11}>
      <BlockTitle>表格属性</BlockTitle>
      <AttrLabel>指标</AttrLabel>
      <AttrRow>
        颜色
        <GearIcon />
        <Hint>拖入一个字段</Hint>
      </AttrRow>
      <AttrRow>
        形状
        <GearIcon />
        <Hint>拖入一个字段</Hint>
      </AttrRow>
      <Dots $cols={5} $left={193}><DotCells count={10} /></Dots>
    </Block>
    <Block $top={21}>
      <BlockTitle>过滤器</BlockTitle>
      <FilterDrop>
        <Hint>拖入字段</Hint>
      </FilterDrop>
    </Block>
  </Settings>
);

const WorkArea = () => (
  <Work>
    {["维度", "指标"].map((name) => (
      <Shelf key={name}>
        <ShelfCell $width={142} $pad={10}>{name}</ShelfCell>
        <ShelfCell $grow $pad={28}>
          <Hint>请拖入左侧字段</Hint>
        </ShelfCell>
        <ShelfCell $last $width={59} $pad={18}>
          <PlainButton aria-label={`清空${name}`}>
            <BrushIcon />
          </PlainButton>
        </ShelfCell>
      </Shelf>
    ))}
    <PreviewLabel>
      <input type="checkbox" />
      手动预览
    </PreviewLabel>
    <Canvas>
      <Line w={24}>
        <path d="M2 0v24M12 0v24M22 0v24" />
        <path d="M7 6v12M17 6v12" strokeWidth="4" />
      </Line>
    </Canvas>
  </Work>
);

const tabs = ["销售top10", "不同商品类别销售额占比", "毛利率分析", "城市KA大客户数记录表"];

const BottomTabs = () => (
  <BottomBar>
    <DataTab href="#data">
      <Line w={25}>
        <ellipse cx="12" cy="5" rx="10" ry="4" />
        <path d="M2 5v14c0 5 20 5 20 0V5M2 12c0 5 20 5 20 0" />
      </Line>
      数据
    </DataTab>
    {tabs.map((name) => (
      <Tab key={name} href="#tab">
        <ChartTabIcon />
        {name}
      </Tab>
    ))}
    <Tab href="#board">
      <BoardIcon />
      仪表板
    </Tab>
    <ActiveTab href="#current">
      <ChartTabIcon />
      地图钻取毛利率分析组件
    </ActiveTab>
    <TabActions>
      <PlainButton aria-label="新建组件">
        <AddIcon color="#3f8f8a" d="M15 21H1V1h22v14M1 6h22M7 18v-5M11 18v-8M15 18v-5" />
      </PlainButton>
      <PlainButton aria-label="新建仪表板">
        <AddIcon color="#6c63d0" d="M15 21H1V1h22v14M15 1v20M1 15h22M15 8h8" />
      </PlainButton>
      <PlainButton aria-label="新建报告">
        <AddIcon color="#5a80dd" d="M15 23H1V1h21v14M5 1v22M9 6h10M9 10h10M9 17h7" />
      </PlainButton>
      <Divider $height={23} $push />
      <PlainButton aria-label="展开">
        <Line w={26} h={26}>
          <circle cx="13" cy="13" r="12" />
          <path d="M7 16l6-6 6 6" />
        </Line>
      </PlainButton>
    </TabActions>
  </BottomBar>
);

const GeoDialog = () => (
  <Dialog role="dialog">
    <DialogHeader>
      <h2>地理角色 (城市)</h2>
      <PlainButton aria-label="关闭">
        <Line w={20} h={20}>
          <path d="M1 1l18 18M19 1L1 19" />
        </Line>
      </PlainButton>
    </DialogHeader>
    <RegionBar>
      <RegionLabel htmlFor="country" $width={103}>国家/地区</RegionLabel>
      <RegionSelect>
        <select id="country">
          <option>中国</option>
        </select>
        <Chevron />
      </RegionSelect>
      <RegionLabel htmlFor="province" $width={130}>省/市/自治区</RegionLabel>
      <RegionSelect>
        <select id="province">
          <option>全部</option>
        </select>
        <Chevron />
      </RegionSelect>
    </RegionBar>
    <DialogBody>
      <ChinaMap />
      <MatchPanel>
        <MatchHeader>
          地区匹配
          <Unmatched>
            <svg width="27" height="24" fill="#e85350">
              <path d="M13 0l13 24H0z" />
              <path d="M12 8h3v8h-3zM12 18h3v3h-3z" fill="#fff" />
            </svg>
            15个未匹配项
          </Unmatched>
        </MatchHeader>
        <MatchScroll>
          <MatchTable>
            <thead>
              <tr>
                <th>您的数据</th>
                <th>匹配到</th>
              </tr>
            </thead>
            <tbody>
              {cities.map((city) => (
                <tr key={city}>
                  <td>{city}</td>
                  <td>
                    <MatchCell>
                      <select aria-label={city}>
                        <option>请选择匹配项</option>
                      </select>
                      <svg width="11" height="10" fill="#051e42"><path d="M11 0v10H0z" /></svg>
                    </MatchCell>
                  </td>
                </tr>
              ))}
              <tr>
                <td />
                <td />
              </tr>
            </tbody>
          </MatchTable>
        </MatchScroll>
      </MatchPanel>
    </DialogBody>
    <DialogFooter>
      <FooterButton>取消</FooterButton>
      <FooterButton $primary>确定</FooterButton>
    </DialogFooter>
    <RedFrame />
  </Dialog>
);

const App = () => {
  return (
    <Page>
      <GlobalStyle />
      <TopBar />
      <Tools />
      <Main>
        <FieldList />
        <ChartSettings />
        <WorkArea />
      </Main>
      <BottomTabs />
      <Overlay>
        <GeoDialog />
      </Overlay>
      <Arrows width="280" height="330">
        <path d="M8 62l32-29 2 15L158 11 42 52l9 14z" strokeWidth="0" />
        <path d="M38 53L158 11" strokeWidth="10" strokeLinecap="round" />
        <path d="M88 316l31-29 1 14 10 18z" strokeWidth="0" />
        <path d="M118 306L267 255" strokeWidth="10" strokeLinecap="round" />
      </Arrows>
    </Page>
  );
};

export default App;
